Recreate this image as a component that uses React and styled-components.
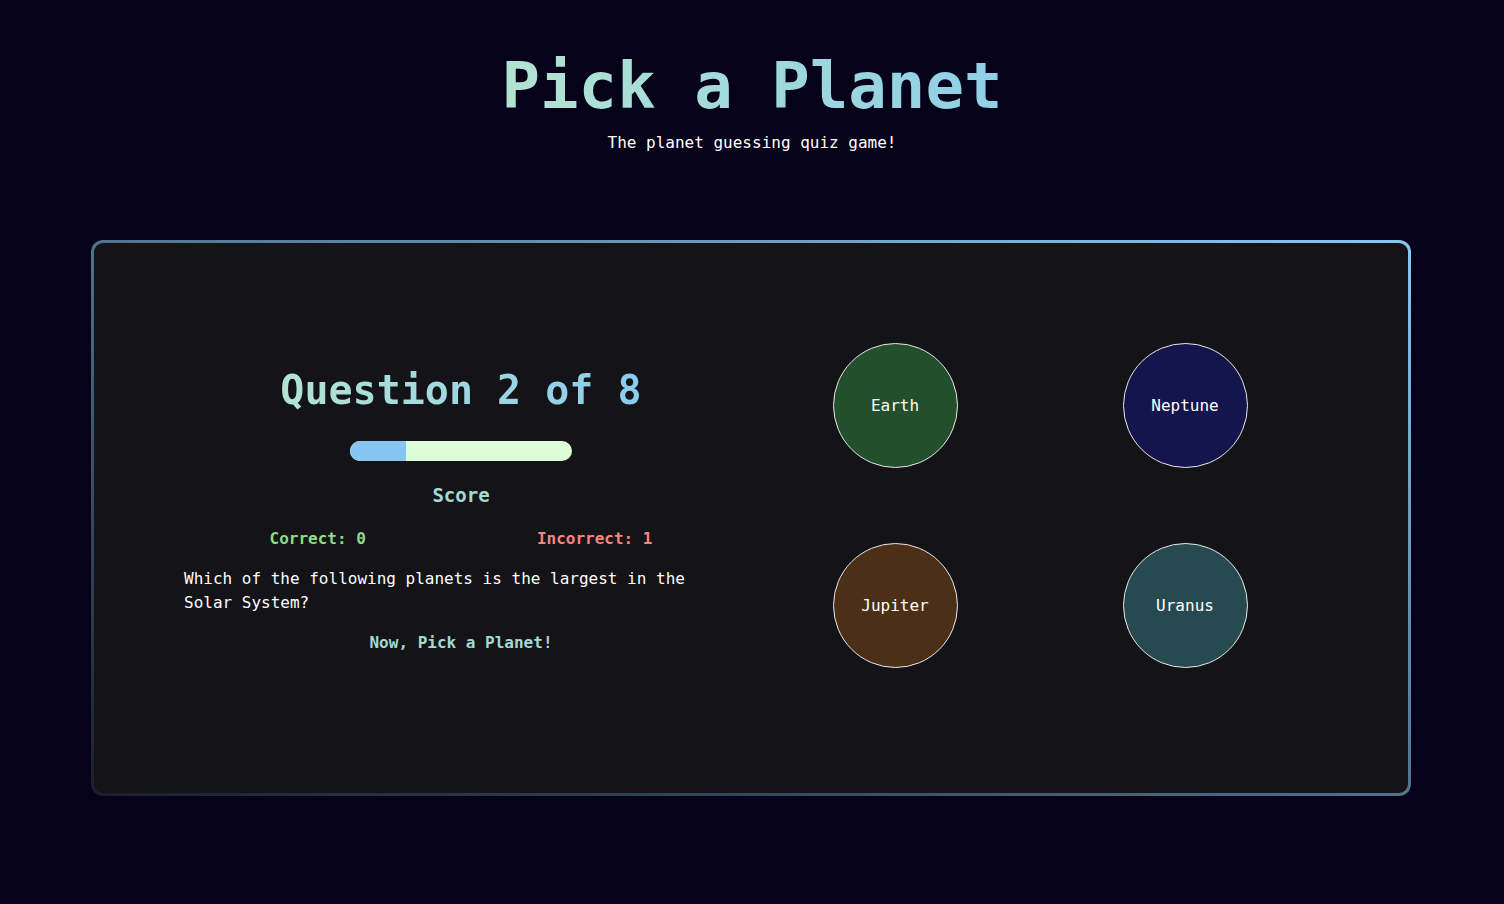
import React from 'react';
import styled, { createGlobalStyle } from 'styled-components';

const GlobalStyle = createGlobalStyle`
  body {
    margin: 0;
    background: #05021a;
    font-family: "DejaVu Sans Mono", "Liberation Mono", monospace;
    color: #ffffff;
  }
`;

const Page = styled.div`
  min-height: 904px;
  display: flex;
  flex-direction: column;
  align-items: center;
`;

const Header = styled.header`
  padding-top: 48px;
  text-align: center;
`;

const Title = styled.h1`
  margin: 0;
  font-size: 64px;
  line-height: 76px;
  font-weight: bold;
  background: linear-gradient(to right, #b3e4d1, #8fcfe6);
  -webkit-background-clip: text;
  background-clip: text;
  color: transparent;
`;

const Subtitle = styled.p`
  margin: 9px 0 0;
  font-size: 16px;
  line-height: 20px;
`;

const Card = styled.main`
  box-sizing: border-box;
  margin: 87px 2px 0 0;
  width: 1320px;
  height: 556px;
  border: 3px solid transparent;
  border-radius: 12px;
  background:
    linear-gradient(#131318, #131318) padding-box,
    linear-gradient(to bottom left, #88c8f2, #1c1d2a) border-box;
  display: flex;
  align-items: center;
  padding: 0 0 26px 90px;
`;

const Quiz = styled.section`
  width: 554px;
  padding-top: 8px;
  display: flex;
  flex-direction: column;
  align-items: center;
`;

const Heading = styled.h2`
  margin: 0;
  font-size: 40px;
  line-height: 48px;
  font-weight: bold;
  background: linear-gradient(to right, #b3e4d1, #8ccbee);
  -webkit-background-clip: text;
  background-clip: text;
  color: transparent;
`;

const Progress = styled.div`
  margin-top: 27px;
  width: 222px;
  height: 20px;
  border-radius: 10px;
  background: #ddfdd9;
  overflow: hidden;
`;

const ProgressFill = styled.div`
  height: 100%;
  background: #88c6f2;
`;

const ScoreLabel = styled.h3`
  margin: 22px 0 0;
  font-size: 19px;
  line-height: 24px;
  font-weight: bold;
  color: #a6d8d2;
`;

const ScoreRow = styled.div`
  margin-top: 22px;
  width: 100%;
  display: flex;
  justify-content: space-around;
`;

const Tally = styled.span`
  font-size: 16px;
  line-height: 20px;
  font-weight: bold;
  color: ${(props) => (props.good ? '#8edb8c' : '#f4867f')};
`;

const QuestionText = styled.p`
  margin: 18px 0 0;
  width: 100%;
  font-size: 16px;
  line-height: 24px;
  text-align: left;
`;

const Prompt = styled.p`
  margin: 18px 0 0;
  font-size: 16px;
  line-height: 20px;
  font-weight: bold;
  color: #a6d8d2;
`;

const Planets = styled.section`
  margin-left: 12px;
  width: 580px;
  display: grid;
  grid-template-columns: 1fr 1fr;
  row-gap: 75px;
  justify-items: center;
`;

const Planet = styled.button`
  box-sizing: border-box;
  width: 125px;
  height: 125px;
  border-radius: 50%;
  border: 1px solid #e8e8e8;
  background: ${(props) => props.color};
  color: #ffffff;
  font-family: inherit;
  font-size: 16px;
  cursor: pointer;
`;

const planets = [
  { name: 'Earth', color: '#244f2c' },
  { name: 'Neptune', color: '#15154d' },
  { name: 'Jupiter', color: '#4d2f17' },
  { name: 'Uranus', color: '#264a4f' },
];

export default function App() {
  const current = 2;
  const total = 8;
  return (
    <>
      <GlobalStyle />
      <Page>
        <Header>
          <Title>Pick a Planet</Title>
          <Subtitle>The planet guessing quiz game!</Subtitle>
        </Header>
        <Card>
          <Quiz>
            <Heading>Question {current} of {total}</Heading>
            <Progress>
              <ProgressFill style={{ width: `${(current / total) * 100}%` }} />
            </Progress>
            <ScoreLabel>Score</ScoreLabel>
            <ScoreRow>
              <Tally good>Correct: 0</Tally>
              <Tally>Incorrect: 1</Tally>
            </ScoreRow>
            <QuestionText>
              Which of the following planets is the largest in the Solar System?
            </QuestionText>
            <Prompt>Now, Pick a Planet!</Prompt>
          </Quiz>
          <Planets>
            {planets.map((p) => (
              <Planet key={p.name} color={p.color}>{p.name}</Planet>
            ))}
          </Planets>
        </Card>
      </Page>
    </>
  );
}
